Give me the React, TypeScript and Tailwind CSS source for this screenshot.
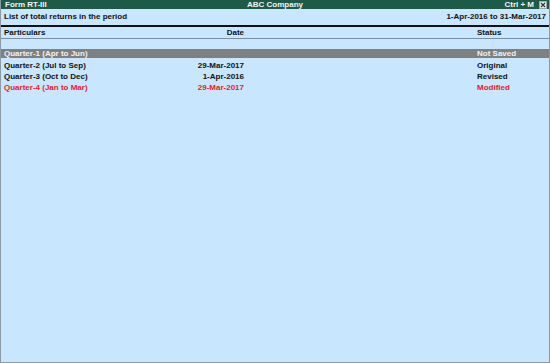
import { ReactNode } from "react";

interface ReturnRow {
  particulars: string;
  date: string;
  status: string;
  tone: "bar" | "normal" | "red";
}

const rows: ReturnRow[] = [
  { particulars: "Quarter-1 (Apr to Jun)", date: "", status: "Not Saved", tone: "bar" },
  { particulars: "Quarter-2 (Jul to Sep)", date: "29-Mar-2017", status: "Original", tone: "normal" },
  { particulars: "Quarter-3 (Oct to Dec)", date: "1-Apr-2016", status: "Revised", tone: "normal" },
  { particulars: "Quarter-4 (Jan to Mar)", date: "29-Mar-2017", status: "Modified", tone: "red" },
];

function Cols({ a, b, c }: { a: ReactNode; b: ReactNode; c: ReactNode }) {
  return (
    <>
      <div className="w-[160px] pl-[3px] whitespace-nowrap">{a}</div>
      <div className="w-[83px] text-right whitespace-nowrap">{b}</div>
      <div className="flex-1" />
      <div className="w-[72px] whitespace-nowrap">{c}</div>
    </>
  );
}

export default function App() {
  return (
    <div
      className="w-[550px] h-[363px] flex flex-col bg-[#c8e6fe] border-x border-b border-[#8c9aa6] text-[8px] font-bold text-[#111] overflow-hidden"
      style={{ fontFamily: '"Liberation Sans", Arial, sans-serif' }}
    >
      {/* Title bar */}
      <div className="h-[9px] shrink-0 flex items-center bg-[#1e5a48] text-[#f4f4f4] leading-[9px] relative">
        <div className="pl-[4px] flex-1">Form RT-III</div>
        <div className="absolute left-0 right-0 text-center pointer-events-none">ABC Company</div>
        <div className="pr-[2px] flex items-center gap-[5px]">
          <span>Ctrl + M</span>
          <svg width="8" height="8" viewBox="0 0 8 8">
            <rect x="0.5" y="0.5" width="7" height="7" fill="#e8ecea" stroke="#a0a8a4" />
            <path d="M2 2 L6 6 M6 2 L2 6" stroke="#2a3a34" strokeWidth="1.2" />
          </svg>
        </div>
      </div>

      {/* Period row */}
      <div className="h-[18px] shrink-0 flex items-center justify-between px-[3px] border-b-2 border-[#111]">
        <span>List of total returns in the period</span>
        <span>1-Apr-2016 to 31-Mar-2017</span>
      </div>

      {/* Column headers */}
      <div className="h-[12px] shrink-0 flex items-center border-b border-[#7a8fa3]">
        <Cols a="Particulars" b="Date" c="Status" />
      </div>

      <div className="h-[10px] shrink-0" />

      {/* Returns */}
      {rows.map((r) =>
        r.tone === "bar" ? (
          <div key={r.particulars} className="h-[9px] shrink-0 flex items-center bg-[#808080] text-[#f2f2f2] mb-[2px]">
            <Cols a={r.particulars} b={r.date} c={r.status} />
          </div>
        ) : (
          <div
            key={r.particulars}
            className={`h-[11px] shrink-0 flex items-center ${r.tone === "red" ? "text-[#f5141c]" : ""}`}
          >
            <Cols a={r.particulars} b={r.date} c={r.status} />
          </div>
        )
      )}
    </div>
  );
}
